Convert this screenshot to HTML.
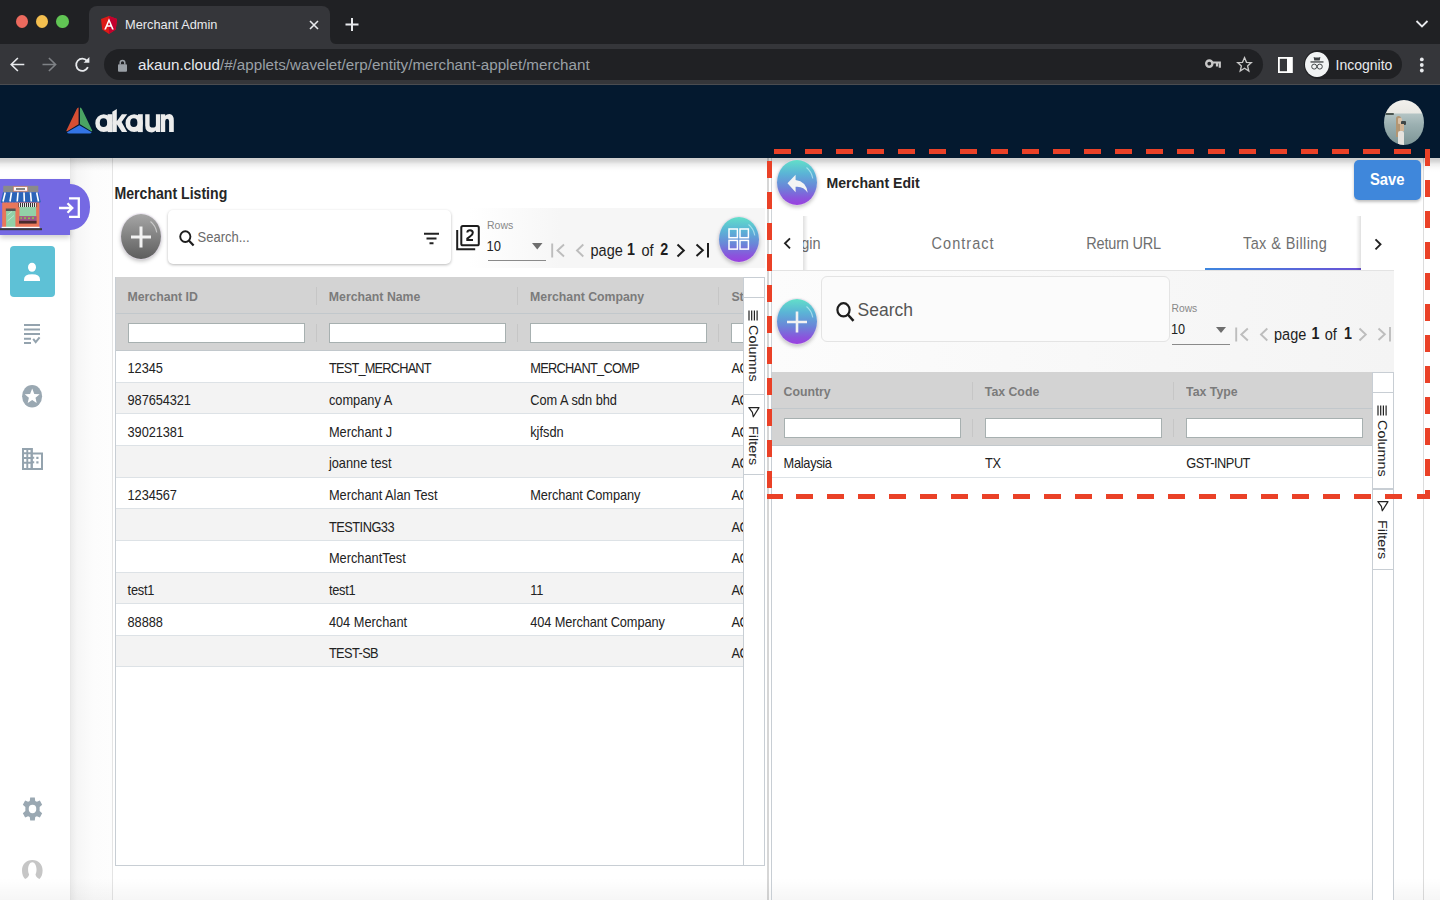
<!DOCTYPE html>
<html><head><meta charset="utf-8">
<style>
*{box-sizing:border-box;margin:0;padding:0}
html,body{width:1440px;height:900px;overflow:hidden;background:#fff;font-family:"Liberation Sans",sans-serif;position:relative}
.a{position:absolute}
.t{position:absolute;white-space:nowrap;line-height:1}
.s{transform:scaleY(1.125);transform-origin:0 0}
svg{position:absolute;overflow:visible}
#tabbar{left:0;top:0;width:1440px;height:44px;background:#202124}
#toolbar{left:0;top:44px;width:1440px;height:41px;background:#35363a;border-bottom:1px solid #4b4c50}
.dot{width:12.5px;height:13.5px;border-radius:50%;top:14.5px}
#tab{left:89px;top:6px;width:241px;height:38px;background:#35363a;border-radius:8px 8px 0 0}
#pill{left:104px;top:49px;width:1159px;height:31px;border-radius:16px;background:#202124}
#incog{left:1304px;top:50px;width:98px;height:29px;border-radius:15px;background:#202124}
#hdr{left:0;top:85px;width:1440px;height:73px;background:#04192f}
#side{left:0;top:158px;width:71px;height:742px;background:#fff;border-right:1px solid #e8e8e8}
#gutter{left:71px;top:158px;width:42px;height:742px;background:linear-gradient(to right,#ececec 0,#f6f6f6 6px,#fcfcfc 22px,#fdfdfd 100%);border-right:1px solid #e4e4e4}
.grid{position:absolute;overflow:hidden;font-size:12.3px;color:#222}
.hrow{position:absolute;left:0;background:#d3d3d3}
.hcell{position:absolute;font-weight:bold;color:#7b7b7b;font-size:12.3px;transform:scaleY(1.06)!important}
.sep{position:absolute;width:1px;background:#c6c6c6}
.finp{position:absolute;height:20px;background:#fff;border:1px solid #a7b0b0}
.row{position:absolute;left:0;border-bottom:1px solid #dde2e6;background:#fff}
.row.o{background:#f3f3f3}
.fab{position:absolute;width:40px;height:45px;border-radius:50%;box-shadow:0 0 0 1px rgba(225,215,235,.55),0 2px 4px rgba(0,0,0,.28)}
.fabg{background:linear-gradient(to bottom,#62dfc9 0%,#5bb4d6 30%,#6a86d8 60%,#8a55dc 85%,#9a40e0 100%)}
</style></head><body>

<!-- ============ BROWSER CHROME ============ -->
<div id="tabbar" class="a"></div>
<div class="a dot" style="left:15.8px;background:#ec6a5e"></div>
<div class="a dot" style="left:35.8px;background:#f4bf4f"></div>
<div class="a dot" style="left:56.2px;background:#61c554"></div>
<div id="tab" class="a"></div>
<svg style="left:83px;top:36px" width="8" height="8"><path d="M0 8 Q6 8 6 0 L6 8Z" fill="#35363a"/></svg>
<svg style="left:328px;top:36px" width="8" height="8"><path d="M8 8 Q2 8 2 0 L2 8Z" fill="#35363a"/></svg>
<svg style="left:101px;top:15.5px" width="16" height="18" viewBox="0 0 16 18"><path d="M8 0 L16 2.9 L14.8 13.5 L8 18 L1.2 13.5 L0 2.9Z" fill="#dd1b16"/><path d="M8 0 L16 2.9 L14.8 13.5 L8 18Z" fill="#c3002f"/><path d="M8 2.3 L3.2 13.4 H5 L6 10.8 H10 L11 13.4 H12.8Z M6.7 9.2 L8 6 L9.3 9.2Z" fill="#fff"/></svg>
<div class="t" style="left:125px;top:18.5px;font-size:12.8px;color:#e8eaed">Merchant Admin</div>
<svg style="left:309px;top:19.5px" width="10" height="10"><path d="M1 1 L9 9 M9 1 L1 9" stroke="#e8eaed" stroke-width="1.6"/></svg>
<svg style="left:345px;top:16.5px" width="14" height="15"><path d="M7 1 V14 M0.5 7.5 H13.5" stroke="#e8eaed" stroke-width="2"/></svg>
<svg style="left:1415px;top:19px" width="14" height="10"><path d="M1.5 2 L7 7.5 L12.5 2" stroke="#e8eaed" stroke-width="1.8" fill="none"/></svg>
<div id="toolbar" class="a"></div>
<svg style="left:9.5px;top:56.5px" width="15" height="15"><path d="M14.3 7.5 H1.5 M7.9 1 L1.2 7.5 L7.9 14" stroke="#e8eaed" stroke-width="1.6" fill="none"/></svg>
<svg style="left:42px;top:56.5px" width="15" height="15"><path d="M0.5 7.5 H13.3 M6.9 1 L13.6 7.5 L6.9 14" stroke="#7f8286" stroke-width="1.6" fill="none"/></svg>
<svg style="left:74.5px;top:56.5px" width="16" height="16"><path d="M12.9 10.2 A6.1 6.1 0 1 1 12 3.9" stroke="#e8eaed" stroke-width="1.8" fill="none"/><path d="M8.6 5.8 L14.4 5.8 L14.4 0 Z" fill="#e8eaed"/></svg>
<div id="pill" class="a"></div>
<svg style="left:117.5px;top:58.5px" width="9" height="13"><path d="M2.2 5.5 V3.8 A2.3 2.3 0 0 1 6.8 3.8 V5.5" stroke="#9aa0a6" stroke-width="1.5" fill="none"/><rect x="0" y="5.3" width="9" height="7.4" rx="1" fill="#9aa0a6"/></svg>
<div class="t" style="left:138px;top:57px;font-size:15.2px;color:#9aa0a6"><span style="color:#e8eaed">akaun.cloud</span>/#/applets/wavelet/erp/entity/merchant-applet/merchant</div>
<svg style="left:1205px;top:59px" width="16" height="10"><circle cx="4.3" cy="4.6" r="3.1" stroke="#c7c7c7" stroke-width="2.4" fill="none"/><path d="M7 3.5 H14.8 V8.8 M12 4 V7.5" stroke="#c7c7c7" stroke-width="2.2" fill="none"/></svg>
<svg style="left:1237px;top:56px" width="16" height="17"><path d="M7.5 1.6 L9.5 6.3 L14.3 6.6 L10.6 9.9 L11.8 15 L7.5 12.3 L3.2 15 L4.4 9.9 L0.7 6.6 L5.5 6.3Z" stroke="#c7c7c7" stroke-width="1.35" fill="none" stroke-linejoin="miter"/></svg>
<svg style="left:1277.5px;top:56.5px" width="15" height="16"><rect x="0.9" y="0.9" width="13" height="14.2" fill="none" stroke="#fff" stroke-width="1.8"/><rect x="9" y="1" width="5" height="14" fill="#fff"/></svg>
<div id="incog" class="a"></div>
<div class="a" style="left:1305px;top:52px;width:23.5px;height:25px;border-radius:50%;background:#f1f3f4"></div>
<svg style="left:1306px;top:52px" width="22" height="25"><path d="M7.6 5 L8.3 8.5 H13.7 L14.4 5 Q11 6.2 7.6 5Z" fill="#3c4043"/><rect x="4.5" y="9.3" width="13" height="1.3" fill="#3c4043"/><circle cx="8.2" cy="14.6" r="2.5" stroke="#3c4043" stroke-width="0.95" fill="none"/><circle cx="13.8" cy="14.6" r="2.5" stroke="#3c4043" stroke-width="0.95" fill="none"/><path d="M10.8 14.2 H11.2" stroke="#3c4043" stroke-width="1.2"/></svg>
<div class="t" style="left:1335.5px;top:57.5px;font-size:14px;color:#e8eaed">Incognito</div>
<svg style="left:1419px;top:56.5px" width="6" height="16"><circle cx="2.8" cy="2.4" r="1.9" fill="#e8eaed"/><circle cx="2.8" cy="8" r="1.9" fill="#e8eaed"/><circle cx="2.8" cy="13.5" r="1.9" fill="#e8eaed"/></svg>

<!-- ============ APP HEADER ============ -->
<div id="hdr" class="a"></div>
<svg style="left:66px;top:106.8px" width="27" height="27" viewBox="0 0 27 27"><path d="M12.6 0.4 Q11.3 0.6 10.6 2.3 L0.4 23.6 Q0.2 24.6 1.2 24.3 L12.6 17.3Z" fill="#d64e33"/><path d="M14 0.4 Q15.3 0.6 16 2.3 L26.2 23.6 Q26.4 24.6 25.4 24.3 L14 17.3Z" fill="#4aa463"/><path d="M13.3 18.3 L25.6 25.2 Q25.3 26.4 23.5 26.5 H3.1 Q1.3 26.4 1 25.2Z" fill="#3374e6"/></svg>
<svg style="left:92px;top:104px" width="86" height="32" viewBox="0 0 86 32"><g fill="#ececec">
<path fill-rule="evenodd" d="M11.8 10.2 A8.5 8.95 0 1 0 11.8 28.1 A8.5 8.95 0 1 0 11.8 10.2Z M11.5 14.3 A3.7 4.35 0 1 1 11.5 23 A3.7 4.35 0 1 1 11.5 14.3Z"/>
<rect x="15.6" y="10.2" width="4.7" height="17.9"/>
<path d="M20.3 7.8 L24.8 5.1 V17.3 L29.9 10.2 H35.2 L29.6 17.9 L35.2 28.1 H29.9 L24.8 20.3 V28.1 H20.3Z"/>
<path fill-rule="evenodd" d="M42.15 10.2 A8.65 8.95 0 1 0 42.15 28.1 A8.65 8.95 0 1 0 42.15 10.2Z M41.8 14.3 A3.6 4.35 0 1 1 41.8 23 A3.6 4.35 0 1 1 41.8 14.3Z"/>
<rect x="46" y="10.2" width="4.8" height="17.9"/>
<path d="M53.2 10.2 H57.6 V21 Q57.6 23.6 60.75 23.6 Q63.9 23.6 63.9 21 V10.2 H68.1 V28.1 H63.9 V26.6 Q62.5 28.4 60 28.4 Q53.2 28.4 53.2 21.5Z"/>
<path d="M68.7 28.1 V10.2 H73.2 V11.8 Q74.6 9.9 77.3 9.9 Q81.8 9.9 81.8 16.5 V28.1 H77.1 V17.2 Q77.1 14.7 75.15 14.7 Q73.2 14.7 73.2 17.2 V28.1Z"/>
</g></svg>
<div class="a" style="left:1383.5px;top:99.5px;width:40.5px;height:45.5px;border-radius:50%;overflow:hidden;background:linear-gradient(to bottom,#f2f1ed 0%,#e9e8e3 29%,#b4c4c4 31%,#9bb0b1 55%,#7d9596 100%)">
  <div class="a" style="left:1px;top:13.5px;width:9px;height:2px;background:#4a5550;border-radius:2px"></div>
  <div class="a" style="left:12.5px;top:16px;width:4.5px;height:21px;background:#b39673;border-radius:3px 3px 1px 1px"></div>
  <div class="a" style="left:14.5px;top:18px;width:3.5px;height:6px;background:#d9c2a8;border-radius:1px"></div>
  <div class="a" style="left:17.5px;top:21px;width:5px;height:4px;background:#3f4646;border-radius:1px"></div>
  <div class="a" style="left:16px;top:24px;width:4px;height:7px;background:#d2b596"></div>
  <div class="a" style="left:14.5px;top:31px;width:6px;height:15px;background:#e6e3de;border-radius:2px 2px 0 0"></div>
</div>
<!-- ============ SIDEBAR ============ -->
<div id="side" class="a"></div>
<div id="gutter" class="a"></div>
<!-- purple block -->
<div class="a" style="left:0;top:179px;width:70px;height:56px;background:#7569e3;box-shadow:0 3px 5px rgba(0,0,0,.18)"></div>
<div class="a" style="left:50.5px;top:184px;width:39.5px;height:45.5px;border-radius:50%;background:#7569e3"></div>
<div class="a" style="left:0;top:179px;width:70px;height:56px;background:#7569e3"></div>
<!-- shop illustration -->
<svg style="left:0;top:185px" width="42" height="47" viewBox="0 0 42 47">
  <rect x="3.3" y="0.8" width="35" height="6.5" fill="#8a8a8a"/>
  <rect x="13.5" y="1.8" width="14" height="4.3" fill="#fff" stroke="#e0705c" stroke-width="0.6"/>
  <path d="M16 4 H25" stroke="#333" stroke-width="1.2"/>
  <path d="M3 7.3 H38.5 L40.8 17 H0.7Z" fill="#2a64b8"/>
  <path d="M5.2 7.5 L3 16.5 M11.5 7.5 L10 16.5 M18 7.5 L17.2 16.5 M24 7.5 L24.3 16.5 M30.5 7.5 L31.3 16.5 M36.7 7.5 L38.5 16.5" stroke="#fff" stroke-width="1.6"/>
  <path d="M0.7 17 Q2 19 3.5 17 Q5 19 6.5 17 Q8 19 9.5 17 Q11 19 12.5 17 Q14 19 15.5 17 Q17 19 18.5 17 Q20 19 21.5 17 Q23 19 24.5 17 Q26 19 27.5 17 Q29 19 30.5 17 Q32 19 33.5 17 Q35 19 36.5 17 Q38 19 40.8 17Z" fill="#2a64b8"/>
  <rect x="2.2" y="17.5" width="37.2" height="25.5" fill="#e8775a"/>
  <rect x="18.5" y="18" width="18" height="4.2" fill="#333"/>
  <path d="M19.5 18 V22 M21.5 18 V22 M23.5 18 V22 M25.5 18 V22 M27.5 18 V22 M29.5 18 V22 M31.5 18 V22 M33.5 18 V22 M35.5 18 V22" stroke="#fff" stroke-width="0.9"/>
  <rect x="19.5" y="22" width="16.6" height="9.2" fill="#92d1a8"/>
  <rect x="19" y="31.2" width="17.6" height="4.8" fill="#9b5a8a"/>
  <path d="M20.5 33 H22 M24 33 H26 M28 33.3 H30 M32 33 H34" stroke="#8cc84b" stroke-width="1.6"/>
  <rect x="19" y="35.8" width="17.6" height="2.8" fill="#4a2a2e"/>
  <rect x="5.8" y="23.5" width="9.8" height="2.8" fill="#555"/>
  <rect x="6.1" y="26" width="9.3" height="17" fill="#92d1a8"/>
  <path d="M7.5 30 L12 26.5 M7.5 36 L14 30.5" stroke="#c8ecd5" stroke-width="0.8"/>
  <rect x="1.6" y="41.8" width="38" height="1.4" fill="#fff"/>
  <rect x="0" y="43.2" width="42" height="2" fill="#3a3a3a"/>
</svg>
<svg style="left:58px;top:196.5px" width="23" height="22"><path d="M11 1.4 H20.8 V19.9 H11" stroke="#fff" stroke-width="2.3" fill="none"/><path d="M1 11 H14 M9.5 6.2 L14.3 11 L9.5 15.8" stroke="#fff" stroke-width="2.3" fill="none"/></svg>
<!-- teal -->
<div class="a" style="left:10px;top:246px;width:45px;height:51.3px;border-radius:4px;background:#5ec1d6"></div>
<svg style="left:23px;top:262px" width="18" height="20"><ellipse cx="9" cy="5.3" rx="4" ry="4.5" fill="#fff"/><path d="M1 19 V17.5 Q1 12.2 9 12.2 Q17 12.2 17 17.5 V19Z" fill="#fff"/></svg>
<!-- list check -->
<svg style="left:24px;top:323px" width="17" height="22"><path d="M0 2 H16 M0 6.5 H16 M0 11 H16 M0 15.7 H7 M0 20 H7" stroke="#94a3ae" stroke-width="2.1"/><path d="M9.2 15.8 L11.7 19.2 L15.6 14.3" stroke="#94a3ae" stroke-width="2" fill="none"/></svg>
<!-- star circle -->
<svg style="left:22px;top:385px" width="21" height="23"><ellipse cx="10.1" cy="11.3" rx="10" ry="11.3" fill="#9aa8b2"/><path d="M10.2 3.6 L12.3 9 L17.7 9.3 L13.5 12.8 L14.7 18 L10.2 15.1 L5.7 18 L6.9 12.8 L2.7 9.3 L8.1 9Z" fill="#fff"/></svg>
<!-- building -->
<svg style="left:22px;top:448px" width="21" height="22"><path d="M1 1 H9.7 V20" stroke="#94a3ae" stroke-width="2" fill="none"/><path d="M1 0 V21 H20 V5.5 H9.7" stroke="#94a3ae" stroke-width="2" fill="none"/><path d="M9.7 0 V21" stroke="#94a3ae" stroke-width="2"/><path d="M5.3 1 V21 M1 5.3 H9.7 M1 10 H9.7 M1 14.7 H9.7" stroke="#94a3ae" stroke-width="1.9"/><path d="M9.7 9.8 H12.2 M9.7 14.3 H12.2" stroke="#94a3ae" stroke-width="1.9"/><rect x="14.3" y="8.8" width="2.2" height="2.2" fill="#94a3ae"/><rect x="14.3" y="13.3" width="2.2" height="2.2" fill="#94a3ae"/></svg>
<!-- gear -->
<svg style="left:22px;top:797px" width="21" height="24" viewBox="0 0 20 22"><g transform="translate(10 11) scale(1 1.1)"><path fill="#9aa8b2" fill-rule="evenodd" d="M-2.2 -10 H2.2 L2.6 -7 L4.2 -6.2 L7 -7.4 L9.2 -3.6 L6.8 -1.7 V1.7 L9.2 3.6 L7 7.4 L4.2 6.2 L2.6 7 L2.2 10 H-2.2 L-2.6 7 L-4.2 6.2 L-7 7.4 L-9.2 3.6 L-6.8 1.7 V-1.7 L-9.2 -3.6 L-7 -7.4 L-4.2 -6.2 L-2.6 -7Z M0 -3.6 A3.6 3.6 0 1 0 0 3.6 A3.6 3.6 0 1 0 0 -3.6Z"/></g></svg>
<!-- person outline -->
<svg style="left:22px;top:859.5px" width="21" height="20"><path fill="#c6c6c6" d="M10.3 0 C16.5 0 20.6 4.5 20.6 10.5 C20.6 14.5 19.2 17.5 17.5 19 C15.5 18.5 13.8 16.5 13.5 14.5 C14.2 13 14.5 11.5 14.5 9.5 C14.5 5.5 12.8 2.2 10.3 2.2 C7.8 2.2 6.1 5.5 6.1 9.5 C6.1 11.5 6.4 13 7.1 14.5 C6.8 16.5 5.1 18.5 3.1 19 C1.4 17.5 0 14.5 0 10.5 C0 4.5 4.1 0 10.3 0Z"/></svg>
<!-- ============ LISTING ============ -->
<div class="t s" style="left:114.5px;top:185.3px;font-size:14.1px;font-weight:bold;color:#262626">Merchant Listing</div>
<div class="a" style="left:470px;top:207.5px;width:295px;height:60px;background:linear-gradient(to right,rgba(246,246,246,0),#f6f6f6 90px)"></div>
<div class="fab" style="left:121px;top:214px;background:linear-gradient(to bottom,#a6a6a6,#5d5d5d)"></div><svg style="left:121px;top:214px" width="40" height="45"><path d="M29.5 7.5 Q34.5 11.5 35.8 18.5" stroke="rgba(255,255,255,.5)" stroke-width="1.1" fill="none"/></svg>
<svg style="left:130px;top:225px" width="22" height="24"><path d="M11 1.5 V22.5 M1 12 H21" stroke="#f2f2f2" stroke-width="3"/></svg>
<div class="a" style="left:167.5px;top:209.5px;width:283.5px;height:54.5px;border-radius:5px;background:#fff;box-shadow:0 1px 3px rgba(0,0,0,.28)"></div>
<svg style="left:179px;top:230px" width="16" height="17"><ellipse cx="6.3" cy="6.6" rx="5.1" ry="5.4" stroke="#1d1d1d" stroke-width="1.9" fill="none"/><path d="M9.8 10.4 L14.6 15.6" stroke="#1d1d1d" stroke-width="2.2"/></svg>
<div class="t s" style="left:197.5px;top:230px;font-size:13px;color:#6a6a6a">Search...</div>
<svg style="left:423px;top:232px" width="17" height="13"><path d="M1 1.7 H16 M3.5 6.5 H13.5 M6.5 11.2 H10.5" stroke="#222" stroke-width="1.9"/></svg>
<svg style="left:456px;top:224.5px" width="24" height="26"><path d="M1.2 5 V24.3 H19.2" stroke="#1d1d1d" stroke-width="2" fill="none"/><rect x="5.3" y="1" width="17.5" height="19.3" rx="1.6" stroke="#1d1d1d" stroke-width="2" fill="none"/><path d="M11.3 7.5 Q11.5 5.2 14 5.2 Q16.8 5.2 16.8 7.7 Q16.8 9.5 14.3 11.3 L11.3 13.6 V15 H17" stroke="#1d1d1d" stroke-width="2" fill="none"/></svg>
<div class="t s" style="left:487px;top:218.5px;font-size:10.5px;color:#888">Rows</div>
<div class="t s" style="left:486.5px;top:239px;font-size:13px;color:#222">10</div>
<svg style="left:531.5px;top:242.5px" width="11" height="7"><path d="M0 0 H10.5 L5.25 6.5Z" fill="#6e6e6e"/></svg>
<div class="a" style="left:488px;top:260px;width:58px;height:1.3px;background:#8a8a8a"></div>
<!-- pager -->
<svg style="left:551px;top:242.5px" width="15" height="15"><path d="M1.2 0.5 V14.5" stroke="#bdbdbd" stroke-width="1.9"/><path d="M13 1.5 L6.5 7.5 L13 13.5" stroke="#bdbdbd" stroke-width="1.9" fill="none"/></svg>
<svg style="left:575px;top:242.5px" width="10" height="15"><path d="M8.3 1.5 L2 7.5 L8.3 13.5" stroke="#bdbdbd" stroke-width="1.9" fill="none"/></svg>
<div class="t s" style="left:590.5px;top:242px;font-size:14.5px;color:#1e1e1e">page</div>
<div class="t s" style="left:627px;top:241.2px;font-size:14.3px;font-weight:bold;color:#1e1e1e">1</div>
<div class="t s" style="left:641.5px;top:242px;font-size:14.5px;color:#1e1e1e">of</div>
<div class="t s" style="left:660.2px;top:241.2px;font-size:14.3px;font-weight:bold;color:#1e1e1e">2</div>
<svg style="left:676px;top:242.5px" width="10" height="15"><path d="M1.5 1.5 L7.8 7.5 L1.5 13.5" stroke="#1e1e1e" stroke-width="2" fill="none"/></svg>
<svg style="left:695px;top:242px" width="16" height="16"><path d="M1.5 2.5 L7.8 8.3 L1.5 14" stroke="#1e1e1e" stroke-width="2" fill="none"/><path d="M13 1 V15.5" stroke="#1e1e1e" stroke-width="2"/></svg>
<div class="fab fabg" style="left:719px;top:216.5px"></div><svg style="left:719px;top:216.5px" width="40" height="45"><path d="M29.5 7.5 Q34.5 11.5 35.8 18.5" stroke="rgba(225,255,255,.55)" stroke-width="1.1" fill="none"/></svg>
<svg style="left:727.5px;top:227.5px" width="22" height="23"><rect x="1" y="1" width="8.4" height="8.7" stroke="#fff" stroke-width="1.5" fill="none"/><rect x="12" y="1" width="8.4" height="8.7" stroke="#fff" stroke-width="1.5" fill="none"/><rect x="1" y="12.4" width="8.4" height="8.7" stroke="#fff" stroke-width="1.5" fill="none"/><rect x="12" y="12.4" width="8.4" height="8.7" stroke="#fff" stroke-width="1.5" fill="none"/></svg>
<!-- LISTING GRID -->
<div class="grid" style="left:115px;top:277px;width:650px;height:589px">
<div class="hrow" style="top:0;width:629px;height:37px;border-bottom:1px solid #c2c8cc"></div>
<div class="hrow" style="top:37px;width:629px;height:37px;border-bottom:1px solid #c2c8cc"></div>
<div class="t s hcell" style="left:12.50px;top:13px">Merchant ID</div>
<div class="finp" style="left:12.50px;top:46px;width:177.30px"></div>
<div class="t s hcell" style="left:213.80px;top:13px">Merchant Name</div>
<div class="sep" style="left:200.80px;top:10px;height:18px"></div>
<div class="sep" style="left:200.80px;top:47px;height:18px"></div>
<div class="finp" style="left:213.80px;top:46px;width:177.30px"></div>
<div class="t s hcell" style="left:415.10px;top:13px">Merchant Company</div>
<div class="sep" style="left:402.10px;top:10px;height:18px"></div>
<div class="sep" style="left:402.10px;top:47px;height:18px"></div>
<div class="finp" style="left:415.10px;top:46px;width:177.30px"></div>
<div class="t s hcell" style="left:616.40px;top:13px">Status</div>
<div class="sep" style="left:603.40px;top:10px;height:18px"></div>
<div class="sep" style="left:603.40px;top:47px;height:18px"></div>
<div class="finp" style="left:616.40px;top:46px;width:177.30px"></div>
<div class="row" style="top:74.00px;width:629px;height:31.65px"></div>
<div class="t s" style="left:12.60px;top:85.30px;font-size:12.8px;letter-spacing:-0.1px">12345</div>
<div class="t s" style="left:213.90px;top:85.30px;font-size:12.8px;letter-spacing:-0.8px">TEST_MERCHANT</div>
<div class="t s" style="left:415.20px;top:85.30px;font-size:12.8px;letter-spacing:-0.7px">MERCHANT_COMP</div>
<div class="t s" style="left:616.50px;top:85.30px;font-size:12.8px;letter-spacing:-0.6px">ACTIVE</div>
<div class="row o" style="top:105.65px;width:629px;height:31.65px"></div>
<div class="t s" style="left:12.60px;top:116.95px;font-size:12.8px;letter-spacing:-0.1px">987654321</div>
<div class="t s" style="left:213.90px;top:116.95px;font-size:12.8px">company A</div>
<div class="t s" style="left:415.20px;top:116.95px;font-size:12.8px">Com A sdn bhd</div>
<div class="t s" style="left:616.50px;top:116.95px;font-size:12.8px;letter-spacing:-0.6px">ACTIVE</div>
<div class="row" style="top:137.30px;width:629px;height:31.65px"></div>
<div class="t s" style="left:12.60px;top:148.60px;font-size:12.8px;letter-spacing:-0.1px">39021381</div>
<div class="t s" style="left:213.90px;top:148.60px;font-size:12.8px">Merchant J</div>
<div class="t s" style="left:415.20px;top:148.60px;font-size:12.8px">kjfsdn</div>
<div class="t s" style="left:616.50px;top:148.60px;font-size:12.8px;letter-spacing:-0.6px">ACTIVE</div>
<div class="row o" style="top:168.95px;width:629px;height:31.65px"></div>
<div class="t s" style="left:213.90px;top:180.25px;font-size:12.8px">joanne test</div>
<div class="t s" style="left:616.50px;top:180.25px;font-size:12.8px;letter-spacing:-0.6px">ACTIVE</div>
<div class="row" style="top:200.60px;width:629px;height:31.65px"></div>
<div class="t s" style="left:12.60px;top:211.90px;font-size:12.8px;letter-spacing:-0.1px">1234567</div>
<div class="t s" style="left:213.90px;top:211.90px;font-size:12.8px">Merchant Alan Test</div>
<div class="t s" style="left:415.20px;top:211.90px;font-size:12.8px;letter-spacing:-0.1px">Merchant Company</div>
<div class="t s" style="left:616.50px;top:211.90px;font-size:12.8px;letter-spacing:-0.6px">ACTIVE</div>
<div class="row o" style="top:232.25px;width:629px;height:31.65px"></div>
<div class="t s" style="left:213.90px;top:243.55px;font-size:12.8px;letter-spacing:-0.5px">TESTING33</div>
<div class="t s" style="left:616.50px;top:243.55px;font-size:12.8px;letter-spacing:-0.6px">ACTIVE</div>
<div class="row" style="top:263.90px;width:629px;height:31.65px"></div>
<div class="t s" style="left:213.90px;top:275.20px;font-size:12.8px">MerchantTest</div>
<div class="t s" style="left:616.50px;top:275.20px;font-size:12.8px;letter-spacing:-0.6px">ACTIVE</div>
<div class="row o" style="top:295.55px;width:629px;height:31.65px"></div>
<div class="t s" style="left:12.60px;top:306.85px;font-size:12.8px;letter-spacing:-0.25px">test1</div>
<div class="t s" style="left:213.90px;top:306.85px;font-size:12.8px;letter-spacing:-0.25px">test1</div>
<div class="t s" style="left:415.20px;top:306.85px;font-size:12.8px">11</div>
<div class="t s" style="left:616.50px;top:306.85px;font-size:12.8px;letter-spacing:-0.6px">ACTIVE</div>
<div class="row" style="top:327.20px;width:629px;height:31.65px"></div>
<div class="t s" style="left:12.60px;top:338.50px;font-size:12.8px;letter-spacing:-0.1px">88888</div>
<div class="t s" style="left:213.90px;top:338.50px;font-size:12.8px">404 Merchant</div>
<div class="t s" style="left:415.20px;top:338.50px;font-size:12.8px;letter-spacing:-0.1px">404 Merchant Company</div>
<div class="t s" style="left:616.50px;top:338.50px;font-size:12.8px;letter-spacing:-0.6px">ACTIVE</div>
<div class="row o" style="top:358.85px;width:629px;height:31.65px"></div>
<div class="t s" style="left:213.90px;top:370.15px;font-size:12.8px;letter-spacing:-0.6px">TEST-SB</div>
<div class="t s" style="left:616.50px;top:370.15px;font-size:12.8px;letter-spacing:-0.6px">ACTIVE</div>
<div class="a" style="left:628px;top:0;width:22px;height:589px;background:#fff;border-left:1px solid #c8ced4;border-right:1px solid #c8ced4"></div>
<div class="a" style="left:628px;top:0;width:22px;height:1px;background:#c8ced4"></div>
<div class="a" style="left:0;top:0;width:1px;height:589px;background:#c8ced4"></div>
<div class="a" style="left:0;top:588px;width:650px;height:1px;background:#c8ced4"></div>
<div class="a" style="left:628px;top:20px;width:22px;height:1px;background:#c8ced4"></div>
<div class="a" style="left:628px;top:116.5px;width:22px;height:1.5px;background:#c8ced4"></div>
<div class="a" style="left:628px;top:197px;width:22px;height:1px;background:#c8ced4"></div>
<svg style="left:633px;top:33px" width="11" height="11"><path d="M1 0.5 V10.5 M3.7 0.5 V10.5 M6.4 0.5 V10.5 M9.1 0.5 V10.5" stroke="#222" stroke-width="1.2"/></svg>
<div class="a" style="left:631.5px;top:48px;width:14px;height:64px;overflow:visible"><div class="t" style="left:0;top:0;writing-mode:vertical-rl;font-size:12.8px;color:#222;transform:scaleY(1.125);transform-origin:0 0">Columns</div></div>
<svg style="left:633px;top:126.5px" width="13" height="15"><path d="M0.9 3.6 H11 L5.3 12.8 L4.4 8.3Z" stroke="#222" stroke-width="1.2" fill="none" stroke-linejoin="round"/></svg>
<div class="a" style="left:631.5px;top:148.5px;width:14px;height:50px;overflow:visible"><div class="t" style="left:0;top:0;writing-mode:vertical-rl;font-size:12.8px;color:#222;transform:scaleY(1.125);transform-origin:0 0">Filters</div></div>
</div>
<!-- ============ SPLITTER / EDIT PANEL FRAME ============ -->
<div class="a" style="left:767px;top:158px;width:2px;height:742px;background:#d6d6d6"></div>
<div class="a" style="left:771px;top:158px;width:653px;height:742px;background:#fff;border-left:1px solid #cfd4d8;border-right:1px solid #dcdcdc"></div>
<!-- header shadow -->
<div class="a" style="left:0;top:158px;width:1440px;height:14px;background:linear-gradient(to bottom,rgba(0,0,0,.19) 0,rgba(0,0,0,.18) 2px,rgba(0,0,0,.137) 4px,rgba(0,0,0,.075) 6px,rgba(0,0,0,.047) 8px,rgba(0,0,0,.024) 10px,rgba(0,0,0,.008) 12px,rgba(0,0,0,0) 14px)"></div>
<!-- bottom fade -->
<div class="a" style="left:0;top:878px;width:1440px;height:22px;background:linear-gradient(to bottom,rgba(0,0,0,0),rgba(0,0,0,.035))"></div>
<!-- ============ EDIT PANEL ============ -->
<div class="fab fabg" style="left:777px;top:160.3px"></div><svg style="left:777px;top:160.3px" width="40" height="45"><path d="M29.5 7.5 Q34.5 11.5 35.8 18.5" stroke="rgba(225,255,255,.55)" stroke-width="1.1" fill="none"/></svg>
<svg style="left:786.5px;top:173.5px" width="22" height="20"><path d="M8.6 0.8 L0.5 9.3 L8.6 18.3 V12.8 Q16.5 11.9 20.7 18.8 Q19.2 7.4 8.6 6.1Z" fill="#f4f4f4"/></svg>
<div class="t" style="left:826.5px;top:176px;font-size:14.1px;font-weight:bold;color:#262626">Merchant Edit</div>
<div class="a" style="left:1354px;top:159.5px;width:67px;height:40.5px;border-radius:5px;background:#3f87db;box-shadow:0 2px 3px rgba(0,0,0,.25)"></div>
<div class="t s" style="left:1370px;top:171px;font-size:14.8px;font-weight:bold;color:#fff">Save</div>

<!-- tabs -->
<div class="a" style="left:772px;top:270px;width:622px;height:1px;background:#e3e3e3"></div>
<div class="t s" style="left:785px;top:235px;font-size:14.5px;color:#6f6f6f">Login</div>
<div class="t s" style="left:931.5px;top:235px;font-size:14.5px;color:#6f6f6f;letter-spacing:1.05px">Contract</div>
<div class="t s" style="left:1086.3px;top:235px;font-size:14.5px;color:#6f6f6f;letter-spacing:-0.2px">Return URL</div>
<div class="t s" style="left:1243px;top:235px;font-size:14.5px;color:#6f6f6f;letter-spacing:0.4px">Tax &amp; Billing</div>
<div class="a" style="left:1204.5px;top:268px;width:156.5px;height:2.2px;background:linear-gradient(to right,#3d86df,#6a52d6)"></div>
<div class="a" style="left:772px;top:216px;width:31px;height:54px;background:#fff"></div><div class="a" style="left:803px;top:216px;width:5px;height:54px;background:linear-gradient(to right,rgba(0,0,0,.12),rgba(0,0,0,0))"></div>
<svg style="left:782.5px;top:237px" width="9" height="13"><path d="M7 1.3 L2 6.3 L7 11.3" stroke="#222" stroke-width="1.9" fill="none"/></svg>
<div class="a" style="left:1361px;top:216px;width:33px;height:54px;background:#fff"></div><div class="a" style="left:1356px;top:216px;width:5px;height:54px;background:linear-gradient(to left,rgba(0,0,0,.12),rgba(0,0,0,0))"></div>
<svg style="left:1373.5px;top:237.5px" width="9" height="13"><path d="M1.5 1.3 L6.5 6.3 L1.5 11.3" stroke="#222" stroke-width="1.9" fill="none"/></svg>

<!-- inner toolbar -->
<div class="a" style="left:772px;top:271px;width:622px;height:101px;background:linear-gradient(to right,#fcfcfc,#f4f4f4)"></div>
<div class="fab fabg" style="left:777px;top:299px"></div><svg style="left:777px;top:299px" width="40" height="45"><path d="M29.5 7.5 Q34.5 11.5 35.8 18.5" stroke="rgba(225,255,255,.55)" stroke-width="1.1" fill="none"/></svg>
<svg style="left:786px;top:310px" width="22" height="24"><path d="M11 1.5 V22.5 M1 12 H21" stroke="#f2f2f2" stroke-width="2.6"/></svg>
<div class="a" style="left:821.3px;top:276.3px;width:349px;height:66px;border-radius:6px;background:#fbfbfb;border:1px solid #e4e4e4"></div>
<svg style="left:835.5px;top:302px" width="19" height="20"><ellipse cx="7.5" cy="7.8" rx="6.1" ry="6.6" stroke="#1d1d1d" stroke-width="2.2" fill="none"/><path d="M11.8 12.5 L17.5 18.8" stroke="#1d1d1d" stroke-width="2.5"/></svg>
<div class="t" style="left:857.5px;top:301.6px;font-size:17.5px;color:#555">Search</div>
<div class="t s" style="left:1171.5px;top:303px;font-size:10.3px;color:#888">Rows</div>
<div class="t s" style="left:1171px;top:323px;font-size:12.7px;color:#222">10</div>
<svg style="left:1215.5px;top:327px" width="11" height="7"><path d="M0 0 H10 L5 6Z" fill="#6e6e6e"/></svg>
<div class="a" style="left:1172px;top:343.5px;width:57.5px;height:1.3px;background:#8a8a8a"></div>
<svg style="left:1235px;top:326.5px" width="15" height="15"><path d="M1.2 0.5 V14.5" stroke="#bdbdbd" stroke-width="1.9"/><path d="M12.8 1.5 L6.3 7.5 L12.8 13.5" stroke="#bdbdbd" stroke-width="1.9" fill="none"/></svg>
<svg style="left:1259px;top:326.5px" width="10" height="15"><path d="M8.3 1.5 L2 7.5 L8.3 13.5" stroke="#bdbdbd" stroke-width="1.9" fill="none"/></svg>
<div class="t s" style="left:1274px;top:326px;font-size:14.5px;color:#1e1e1e">page</div>
<div class="t s" style="left:1311.5px;top:325.2px;font-size:14.3px;font-weight:bold;color:#1e1e1e">1</div>
<div class="t s" style="left:1324.8px;top:326px;font-size:14.5px;color:#1e1e1e">of</div>
<div class="t s" style="left:1344px;top:325.2px;font-size:14.3px;font-weight:bold;color:#1e1e1e">1</div>
<svg style="left:1357.5px;top:326.5px" width="10" height="15"><path d="M1.5 1.5 L7.8 7.5 L1.5 13.5" stroke="#bdbdbd" stroke-width="1.9" fill="none"/></svg>
<svg style="left:1376.5px;top:326px" width="16" height="16"><path d="M1.5 2.5 L7.8 8.3 L1.5 14" stroke="#bdbdbd" stroke-width="1.9" fill="none"/><path d="M13 1 V15.5" stroke="#bdbdbd" stroke-width="1.9"/></svg>
<!-- EDIT GRID -->
<div class="grid" style="left:771px;top:372px;width:623px;height:540px">
<div class="hrow" style="top:0;width:602px;height:37px;border-bottom:1px solid #c2c8cc"></div>
<div class="hrow" style="top:37px;width:602px;height:37px;border-bottom:1px solid #c2c8cc"></div>
<div class="t s hcell" style="left:12.50px;top:13px">Country</div>
<div class="finp" style="left:12.50px;top:46px;width:177.30px"></div>
<div class="t s hcell" style="left:213.80px;top:13px">Tax Code</div>
<div class="sep" style="left:200.80px;top:10px;height:18px"></div>
<div class="sep" style="left:200.80px;top:47px;height:18px"></div>
<div class="finp" style="left:213.80px;top:46px;width:177.30px"></div>
<div class="t s hcell" style="left:415.10px;top:13px">Tax Type</div>
<div class="sep" style="left:402.10px;top:10px;height:18px"></div>
<div class="sep" style="left:402.10px;top:47px;height:18px"></div>
<div class="finp" style="left:415.10px;top:46px;width:177.30px"></div>
<div class="row" style="top:74.00px;width:602px;height:31.65px"></div>
<div class="t s" style="left:12.60px;top:85.30px;font-size:12.8px;letter-spacing:-0.3px">Malaysia</div>
<div class="t s" style="left:213.90px;top:85.30px;font-size:12.8px;letter-spacing:-0.3px">TX</div>
<div class="t s" style="left:415.20px;top:85.30px;font-size:12.8px;letter-spacing:-0.5px">GST-INPUT</div>
<div class="a" style="left:601px;top:0;width:22px;height:540px;background:#fff;border-left:1px solid #c8ced4;border-right:1px solid #c8ced4"></div>
<div class="a" style="left:601px;top:0;width:22px;height:1px;background:#c8ced4"></div>
<div class="a" style="left:0;top:0;width:1px;height:540px;background:#c8ced4"></div>
<div class="a" style="left:0;top:539px;width:623px;height:1px;background:#c8ced4"></div>
<div class="a" style="left:601px;top:20px;width:22px;height:1px;background:#c8ced4"></div>
<div class="a" style="left:601px;top:116px;width:22px;height:1.5px;background:#c8ced4"></div>
<div class="a" style="left:601px;top:197px;width:22px;height:1px;background:#c8ced4"></div>
<svg style="left:606px;top:33px" width="11" height="11"><path d="M1 0.5 V10.5 M3.7 0.5 V10.5 M6.4 0.5 V10.5 M9.1 0.5 V10.5" stroke="#222" stroke-width="1.2"/></svg>
<div class="a" style="left:604.5px;top:48px;width:14px;height:64px;overflow:visible"><div class="t" style="left:0;top:0;writing-mode:vertical-rl;font-size:12.8px;color:#222;transform:scaleY(1.125);transform-origin:0 0">Columns</div></div>
<svg style="left:606px;top:126px" width="13" height="15"><path d="M0.9 3.6 H11 L5.3 12.8 L4.4 8.3Z" stroke="#222" stroke-width="1.2" fill="none" stroke-linejoin="round"/></svg>
<div class="a" style="left:604.5px;top:148px;width:14px;height:50px;overflow:visible"><div class="t" style="left:0;top:0;writing-mode:vertical-rl;font-size:12.8px;color:#222;transform:scaleY(1.125);transform-origin:0 0">Filters</div></div>
</div>
<!-- ============ RED DASHED BOX ============ -->
<div class="a" style="left:774px;top:149px;width:656px;height:5px;background:repeating-linear-gradient(to right,#ea4127 0 17px,transparent 17px 31px)"></div>
<div class="a" style="left:767px;top:161px;width:5px;height:338px;background:repeating-linear-gradient(to bottom,#ea4127 0 17px,transparent 17px 31px)"></div>
<div class="a" style="left:1425px;top:149px;width:5px;height:350px;background:repeating-linear-gradient(to bottom,#ea4127 0 17px,transparent 17px 31px)"></div>
<div class="a" style="left:767px;top:494px;width:663px;height:5px;background:repeating-linear-gradient(to right,transparent 0 14px,#ea4127 14px 31px);background-position:-16px 0"></div>
<div class="a" style="left:767px;top:494px;width:16px;height:5px;background:#ea4127"></div>
<div class="a" style="left:1417px;top:494px;width:13px;height:5px;background:#ea4127"></div>
</body></html>
